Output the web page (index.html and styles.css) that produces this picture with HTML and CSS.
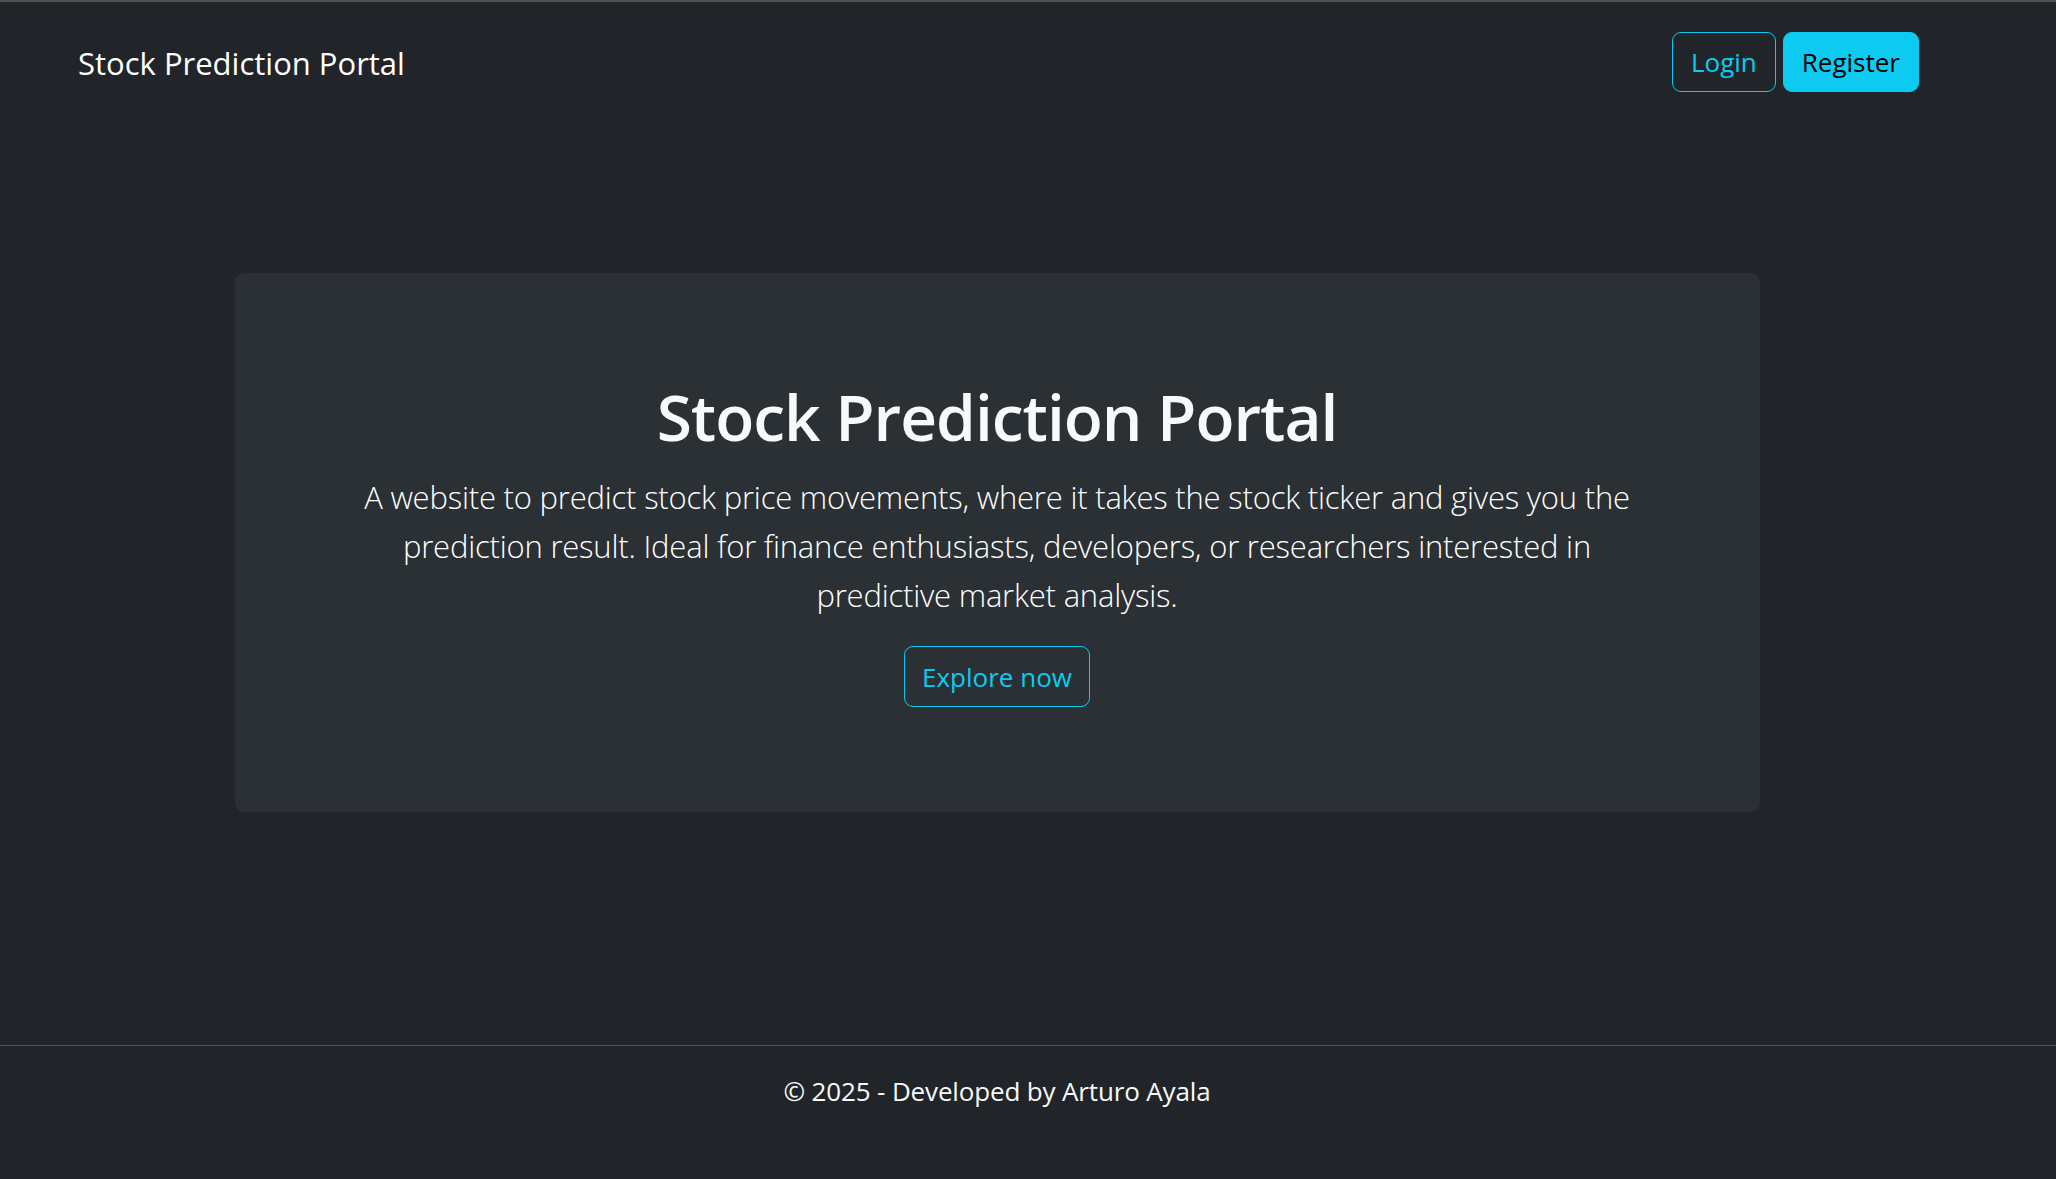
FILE: index.html
```html
<!DOCTYPE html>
<html lang="en">
<head>
<meta charset="utf-8">
<title>Stock Prediction Portal</title>
<link rel="stylesheet" href="styles.css">
</head>
<body>
  <header class="topbar">
    <div class="shell nav">
      <a class="brand" href="#">Stock Prediction Portal</a>
      <div class="actions">
        <a class="btn btn-outline" href="#">Login</a>
        <a class="btn btn-solid" href="#">Register</a>
      </div>
    </div>
  </header>
  <main class="main">
    <div class="shell">
      <section class="hero">
        <h1 class="hero-title">Stock Prediction Portal</h1>
        <p class="hero-lead">A website to predict stock price movements, where it takes the stock ticker and gives you the prediction result. Ideal for finance enthusiasts, developers, or researchers interested in predictive market analysis.</p>
        <a class="btn btn-outline btn-explore" href="#">Explore now</a>
      </section>
    </div>
  </main>
  <footer class="footer">
    <div class="shell">
      <p class="footer-text">© 2025 - Developed by Arturo Ayala</p>
    </div>
  </footer>
</body>
</html>
```

FILE: styles.css
```css
* { box-sizing: border-box; }

html, body { margin: 0; padding: 0; }

body {
  min-height: 1179px;
  display: flex;
  flex-direction: column;
  background: #212529;
  color: #f8f9fa;
  font-family: "Open Sans", "Noto Sans", "Liberation Sans", sans-serif;
  border-top: 2px solid #4f5154;
}

a { text-decoration: none; }

.shell { width: 1994px; }

.nav {
  display: flex;
  align-items: center;
  justify-content: space-between;
  height: 90px;
  padding: 30px 75px 0 78px;
}

.brand {
  color: #ffffff;
  font-size: 31px;
  line-height: 58px;
  font-weight: 400;
  padding-top: 2px;
}

.actions {
  display: flex;
  gap: 7px;
}

.btn {
  display: inline-flex;
  align-items: center;
  justify-content: center;
  height: 60px;
  padding: 0 18px;
  border-radius: 9px;
  font-size: 26px;
  font-weight: 400;
  border: 1px solid #0dcaf0;
}

.btn-outline {
  color: #0dcaf0;
  background: transparent;
}

.btn-solid {
  color: #000000;
  background: #0dcaf0;
}

.main { flex: 1; }

.hero {
  width: 1525px;
  margin: 181px auto 0;
  padding: 104px 0 105px;
  background: #2b3035;
  border-radius: 9px;
  text-align: center;
}

.hero-title {
  margin: 0 0 16px;
  font-size: 64px;
  line-height: 80px;
  font-weight: 600;
  letter-spacing: -1px;
  color: #f8f9fa;
}

.hero-lead {
  max-width: 1330px;
  margin: 0 auto 26px;
  font-size: 31px;
  line-height: 49px;
  font-weight: 300;
  letter-spacing: -0.2px;
  color: #ffffff;
}

.btn-explore {
  height: 61px;
  padding: 0 17px;
}

.footer {
  border-top: 1px solid #495057;
  height: 134px;
}

.footer-text {
  margin: 0;
  padding-top: 26px;
  text-align: center;
  font-size: 26px;
  line-height: 39px;
  letter-spacing: -0.15px;
  color: #f8f9fa;
}
```
